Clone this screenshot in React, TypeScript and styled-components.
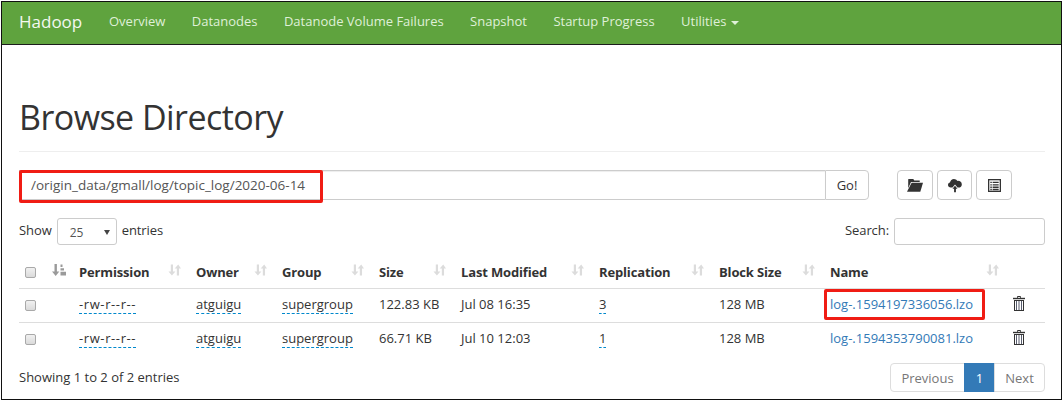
import React from "react";
import styled, { createGlobalStyle } from "styled-components";

const GlobalStyle = createGlobalStyle`
  html, body {
    margin: 0;
    padding: 0;
    background: #fff;
  }
  body {
    font-family: "Open Sans", "Noto Sans", "Liberation Sans", sans-serif;
    font-size: 13px;
    color: #333;
  }
  * { box-sizing: border-box; }
`;

const navItems = ["Overview", "Datanodes", "Datanode Volume Failures", "Snapshot", "Startup Progress"];

const columns = [
  { label: "Permission", width: 117 },
  { label: "Owner", width: 86 },
  { label: "Group", width: 97 },
  { label: "Size", width: 82 },
  { label: "Last Modified", width: 138 },
  { label: "Replication", width: 120 },
  { label: "Block Size", width: 111 },
  { label: "Name", width: 184 },
];

const rows = [
  { size: "122.83 KB", date: "Jul 08 16:35", rep: "3", name: "log-.1594197336056.lzo" },
  { size: "66.71 KB", date: "Jul 10 12:03", rep: "1", name: "log-.1594353790081.lzo" },
];

const SortIcon = () => (
  <SortSvg viewBox="0 0 14 14" width="13" height="14">
    <path d="M3 1h2.400v7.500H8L4.200 13 .5 8.500H3z" />
    <path d="M9.500 13V5.500H7.200L11 1l3 4.500h-2.100V13z" />
  </SortSvg>
);

const ActiveSortIcon = () => (
  <ActiveSortSvg viewBox="0 0 14 14" width="14" height="14">
    <path d="M2.500 1h2.400v7.500h2.400L3.700 13 0 8.500h2.500z" />
    <path d="M8.500 1.500h2v2.500h-2zM8.500 5.200h3.500v2.400H8.500zM8.500 8.800H14v3.700H8.500z" />
  </ActiveSortSvg>
);

const FolderIcon = () => (
  <svg viewBox="0 0 16 13" width="16" height="13" fill="#333">
    <path d="M1.500 0h4.800l1 1.400h5.400v1.500H4L1.200 9.200V.5z" />
    <path d="M4.600 3.800H16l-2.700 9H0z" />
  </svg>
);

const CloudIcon = () => (
  <svg viewBox="0 0 15 15" width="14" height="15" fill="#333">
    <path d="M3 9.700C1.200 9.700 0 8.500 0 7c0-1.300.9-2.300 2.100-2.600C2.500 2.200 4.200.6 6.400.6c1.500 0 2.800.8 3.500 2 2.700-.4 4.900 1.300 4.900 3.700 0 1.900-1.400 3.400-3.400 3.400H10.200L7.500 6.400 4.800 9.700z" />
    <path d="M7.500 7.800l2.700 3.200H8.500v3.600h-2V11H4.800z" />
  </svg>
);

const ListIcon = () => (
  <svg viewBox="0 0 14 14" width="13" height="13">
    <rect x="0.700" y="0.700" width="12.600" height="12.600" fill="#fff" stroke="#333" strokeWidth="1.400" />
    <path d="M2.500 3h1.600v1.400H2.500zM5 3h6.500v1.400H5zM2.500 5.600h1.600V7H2.500zM5 5.600h6.500V7H5zM2.500 8.200h1.600v1.400H2.500zM5 8.200h6.500v1.400H5zM2.500 10.600h1.600V12H2.500zM5 10.600h6.500V12H5z" fill="#333" />
  </svg>
);

const TrashIcon = () => (
  <svg viewBox="0 0 12 15" width="12" height="15" fill="none" stroke="#333">
    <path d="M4.500 1.800V.5h3v1.300" />
    <path d="M0 2.500h12" strokeWidth="1.400" />
    <rect x="1.500" y="4.500" width="9" height="10" />
    <path d="M3.500 5v9M6 5v9M8.500 5v9" stroke="#5a5f70" />
  </svg>
);

export default function App() {
  return (
    <Frame>
      <GlobalStyle />
      <Navbar>
        <Brand>Hadoop</Brand>
        {navItems.map((item) => (
          <NavLink key={item}>{item}</NavLink>
        ))}
        <NavLink>
          Utilities <Caret />
        </NavLink>
      </Navbar>
      <Content>
        <PageHeader>
          <Title>Browse Directory</Title>
        </PageHeader>
        <PathRow>
          <PathGroup>
            <PathInput defaultValue="/origin_data/gmall/log/topic_log/2020-06-14" />
            <GoButton>Go!</GoButton>
            <PathHighlight />
          </PathGroup>
          <IconButtons>
            <IconButton $width={36}><FolderIcon /></IconButton>
            <IconButton $width={35}><CloudIcon /></IconButton>
            <IconButton $width={36}><ListIcon /></IconButton>
          </IconButtons>
        </PathRow>
        <Controls>
          <LengthLabel>
            Show
            <PageSize>
              <span>25</span>
              <SelectArrow />
            </PageSize>
            entries
          </LengthLabel>
          <SearchLabel>
            Search:
            <SearchInput />
          </SearchLabel>
        </Controls>
        <Table>
          <colgroup>
            <col width={25} />
            <col width={27} />
            {columns.map((c) => (
              <col key={c.label} width={c.width} />
            ))}
            <col width={39} />
          </colgroup>
          <thead>
            <tr>
              <HeadCheckCell as="th"><Checkbox /></HeadCheckCell>
              <HeadCell><ActiveSortIcon /></HeadCell>
              {columns.map((c) => (
                <HeadCell key={c.label}>
                  {c.label}
                  <SortIcon />
                </HeadCell>
              ))}
              <HeadCell />
            </tr>
          </thead>
          <tbody>
            {rows.map((row) => (
              <Row key={row.name}>
                <CheckCell><Checkbox /></CheckCell>
                <Cell />
                <Cell><Permission>-rw-r--r--</Permission></Cell>
                <Cell><Editable>atguigu</Editable></Cell>
                <Cell><Editable>supergroup</Editable></Cell>
                <Cell>{row.size}</Cell>
                <Cell>{row.date}</Cell>
                <Cell><Editable>{row.rep}</Editable></Cell>
                <Cell>128 MB</Cell>
                <Cell>
                  <FileLink>{row.name}</FileLink>
                  {row.rep === "3" && <NameHighlight />}
                </Cell>
                <TrashCell><TrashIcon /></TrashCell>
              </Row>
            ))}
          </tbody>
        </Table>
        <Footer>
          <FooterInfo>Showing 1 to 2 of 2 entries</FooterInfo>
          <Pagination>
            <PageLink $width={75}>Previous</PageLink>
            <PageLink $width={31} $active>1</PageLink>
            <PageLink $width={51}>Next</PageLink>
          </Pagination>
        </Footer>
      </Content>
    </Frame>
  );
}

const Frame = styled.div`
  margin: 1px;
  width: 1061px;
  height: 399px;
  border: 1px solid #111;
  overflow: hidden;
`;

const Navbar = styled.nav`
  display: flex;
  align-items: center;
  height: 43px;
  padding: 0 0 4px 17px;
  background: #5fa33e;
  border-bottom: 1px solid #1c1c1c;
`;

const Brand = styled.a`
  width: 90px;
  color: #f4f8f1;
  font-size: 17px;
`;

const NavLink = styled.a`
  margin-right: 26.4px;
  color: #dff0d8;
  font-size: 13px;
`;

const Caret = styled.span`
  display: inline-block;
  margin-left: 1px;
  vertical-align: middle;
  border-top: 4px solid #dff0d8;
  border-left: 4px solid transparent;
  border-right: 4px solid transparent;
`;

const Content = styled.main`
  padding: 0 16px 0 17px;
`;

const PageHeader = styled.div`
  margin-top: 47px;
  height: 60px;
  border-bottom: 1px solid #eee;
`;

const Title = styled.h1`
  margin: 0;
  font-size: 34px;
  font-weight: 400;
  line-height: 50px;
  letter-spacing: -0.55px;
`;

const PathRow = styled.div`
  display: flex;
  align-items: flex-start;
  margin-top: 18px;
`;

const PathGroup = styled.div`
  position: relative;
  display: flex;
  width: 850px;
  height: 30px;
`;

const PathInput = styled.input`
  flex: 1;
  min-width: 0;
  padding: 0 11px 1px;
  border: 1px solid #ccc;
  border-right: 0;
  box-shadow: inset 0 1px 1px rgba(0, 0, 0, 0.075);
  color: #555;
  font: inherit;
  font-size: 13.5px;
`;

const GoButton = styled.button`
  width: 44px;
  padding: 0;
  background: #fff;
  border: 1px solid #ccc;
  border-radius: 0 4px 4px 0;
  color: #333;
  font: inherit;
`;

/* red annotations drawn on the screenshot */
const PathHighlight = styled.div`
  position: absolute;
  left: 0;
  top: 0;
  width: 304px;
  height: 33px;
  border: 3px solid #f01c14;
  border-radius: 2px;
  pointer-events: none;
`;

const NameHighlight = styled.div`
  position: absolute;
  left: 2px;
  top: 0;
  width: 161px;
  height: 31px;
  border: 3px solid #f01c14;
  border-radius: 2px;
  pointer-events: none;
`;

const IconButtons = styled.div`
  display: flex;
  gap: 4px;
  margin-left: 28px;
`;

const IconButton = styled.button<{ $width: number }>`
  display: flex;
  align-items: center;
  justify-content: center;
  width: ${(p) => p.$width}px;
  height: 30px;
  padding: 0;
  background: #fff;
  border: 1px solid #ccc;
  border-radius: 4px;
`;

const Controls = styled.div`
  display: flex;
  justify-content: space-between;
  align-items: center;
  height: 27px;
  margin-top: 18px;
`;

const LengthLabel = styled.div`
  display: flex;
  align-items: center;
  gap: 5px;
  padding-bottom: 3px;
  height: 27px;
  letter-spacing: -0.08px;
`;

const PageSize = styled.div`
  display: flex;
  flex-shrink: 0;
  align-items: center;
  justify-content: space-between;
  width: 60px;
  height: 27px;
  margin-bottom: -3px;
  padding: 2px 5px 0 12px;
  border: 1px solid #ccc;
  border-radius: 3px;
  color: #555;
  font-size: 12px;
`;

const SelectArrow = styled.span`
  margin-right: 1px;
  border-top: 5px solid #444;
  border-left: 3px solid transparent;
  border-right: 3px solid transparent;
`;

const SearchLabel = styled(LengthLabel)``;

const SearchInput = styled.input`
  width: 151px;
  height: 27px;
  margin-bottom: -3px;
  border: 1px solid #ccc;
  border-radius: 3px;
`;

const Table = styled.table`
  width: 1026px;
  margin-top: 6px;
  border-collapse: collapse;
  table-layout: fixed;
`;

const HeadCell = styled.th`
  position: relative;
  height: 37px;
  padding: 6px 8px 0;
  border-bottom: 1px solid #ddd;
  font-size: 13px;
  font-weight: 700;
  letter-spacing: -0.15px;
  text-align: left;
  white-space: nowrap;
`;

const SortSvg = styled.svg`
  position: absolute;
  right: 7px;
  top: 12px;
  fill: #dcdcdc;
`;

const ActiveSortSvg = styled.svg`
  position: absolute;
  left: 8px;
  top: 12px;
  fill: #9a9a9a;
`;

const Cell = styled.td`
  position: relative;
  height: 34px;
  padding: 0 8px 3px;
  white-space: nowrap;
`;

const TrashCell = styled(Cell)`
  padding: 0 0 3px 7px;
  line-height: 0;
`;

const CheckCell = styled.td`
  padding: 1px 0 0 6px;
  line-height: 0;
  text-align: left;
`;

const HeadCheckCell = styled(CheckCell)`
  padding-top: 7px;
  border-bottom: 1px solid #ddd;
`;

/* rule between the rows only, the table has no closing line */
const Row = styled.tr`
  &:not(:last-child) td {
    border-bottom: 1px solid #ddd;
  }
`;

const Checkbox = styled.span`
  display: inline-block;
  width: 11px;
  height: 11px;
  background: linear-gradient(#f1f1f1, #dadada);
  border: 1px solid #a9a9a9;
  border-radius: 2px;
`;

const Editable = styled.a`
  border-bottom: 1px dashed #08c;
`;

const Permission = styled(Editable)`
  letter-spacing: 0.6px;
`;

const FileLink = styled.a`
  color: #337ab7;
`;

const Footer = styled.div`
  display: flex;
  justify-content: space-between;
  align-items: center;
  height: 29px;
  margin-top: 7px;
`;

const FooterInfo = styled.span`
  margin-bottom: 2px;
`;

const Pagination = styled.div`
  display: flex;
`;

const PageLink = styled.a<{ $width: number; $active?: boolean }>`
  display: flex;
  align-items: center;
  justify-content: center;
  width: ${(p) => p.$width}px;
  height: 29px;
  margin-left: -1px;
  background: ${(p) => (p.$active ? "#337ab7" : "#fff")};
  border: 1px solid ${(p) => (p.$active ? "#337ab7" : "#ddd")};
  color: ${(p) => (p.$active ? "#fff" : "#777")};
  &:first-child {
    border-radius: 4px 0 0 4px;
  }
  &:last-child {
    border-radius: 0 4px 4px 0;
  }
`;
